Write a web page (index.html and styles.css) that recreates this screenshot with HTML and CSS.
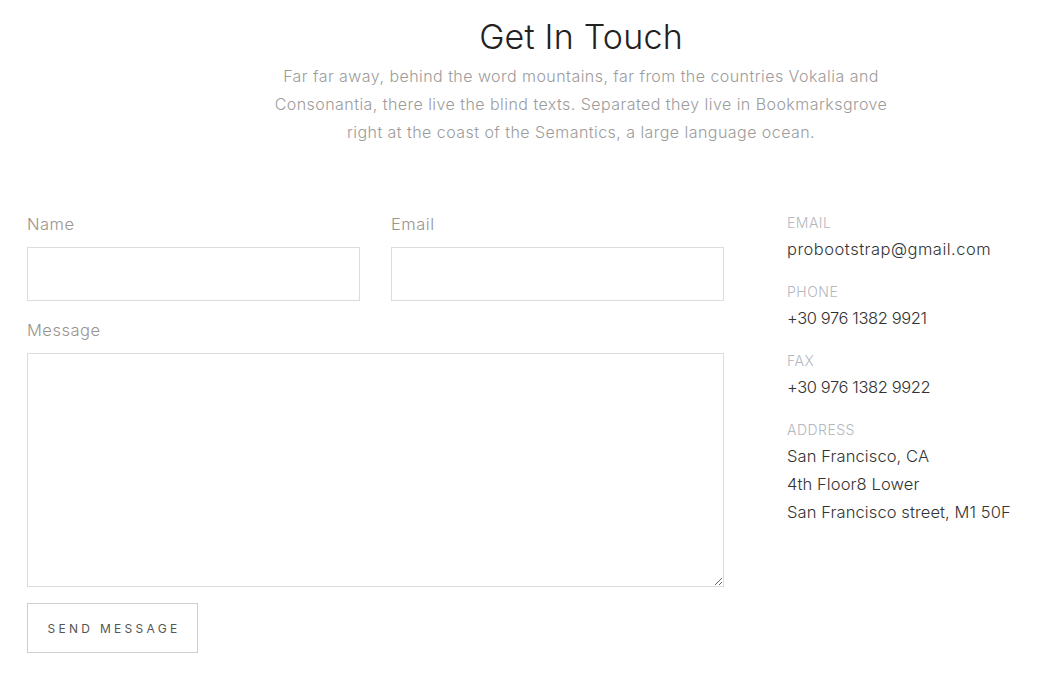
FILE: index.html
```html
<!DOCTYPE html>
<html lang="en">
<head>
<meta charset="utf-8">
<title>Get In Touch</title>
<link rel="stylesheet" href="styles.css">
</head>
<body>
<section class="contact">
  <header class="intro">
    <h2 class="intro-title">Get In Touch</h2>
    <p class="intro-text">Far far away, behind the word mountains, far from the countries Vokalia and<br>Consonantia, there live the blind texts. Separated they live in Bookmarksgrove<br>right at the coast of the Semantics, a large language ocean.</p>
  </header>
  <div class="contact-body">
    <form class="contact-form">
      <div class="form-row">
        <div class="field">
          <label class="field-label" for="name">Name</label>
          <input class="field-input" id="name" type="text">
        </div>
        <div class="field">
          <label class="field-label" for="email">Email</label>
          <input class="field-input" id="email" type="email">
        </div>
      </div>
      <div class="field">
        <label class="field-label" for="message">Message</label>
        <textarea class="field-textarea" id="message"></textarea>
      </div>
      <button class="send-btn" type="button">Send Message</button>
    </form>
    <aside class="contact-info">
      <div class="info-block">
        <div class="info-label">Email</div>
        <div class="info-value">probootstrap@gmail.com</div>
      </div>
      <div class="info-block">
        <div class="info-label">Phone</div>
        <div class="info-value info-number">+30 976 1382 9921</div>
      </div>
      <div class="info-block">
        <div class="info-label">Fax</div>
        <div class="info-value info-number">+30 976 1382 9922</div>
      </div>
      <div class="info-block">
        <div class="info-label">Address</div>
        <div class="info-value info-address">San Francisco, CA<br>4th Floor8 Lower<br>San Francisco street, M1 50F</div>
      </div>
    </aside>
  </div>
</section>
</body>
</html>
```
FILE: styles.css
```css
* { box-sizing: border-box; }
html, body { margin: 0; padding: 0; background: #fff; }
body {
  font-family: Inter, "Open Sans", "Liberation Sans", sans-serif;
  font-weight: 300;
  color: #333;
  width: 1056px;
  height: 696px;
  overflow: hidden;
}
.contact { padding: 0 0 0 27px; }
.intro {
  width: 660px;
  margin-left: 224px;
  text-align: center;
  padding-top: 15px;
}
.intro-title {
  margin: 0;
  font-size: 34px;
  font-weight: 300;
  line-height: 44px;
  letter-spacing: 0.2px;
  color: #222;
}
.intro-text {
  margin: 3px 0 0;
  font-size: 16px;
  line-height: 28px;
  letter-spacing: 0.45px;
  color: #9c9c9c;
}
.contact-body {
  display: flex;
  gap: 63px;
  margin-top: 66px;
}
.contact-form { width: 697px; flex: none; }
.form-row { display: flex; gap: 31px; }
.form-row .field { flex: 1; }
.field { margin-bottom: 17px; }
.contact-form > .field { margin-bottom: 16px; }
.field-label {
  display: block;
  font-size: 16.5px;
  line-height: 24px;
  letter-spacing: 0.5px;
  color: #9a948f;
  margin-bottom: 11px;
}
.field-input, .field-textarea {
  display: block;
  width: 100%;
  border: 1px solid #dcdcdc;
  border-radius: 0;
  background: #fff;
  font: inherit;
  outline: none;
}
.field-input { height: 54px; }
.field-textarea { height: 234px; resize: vertical; }
.send-btn {
  display: block;
  height: 50px;
  width: 171px;
  border: 1px solid #cfcfcf;
  background: #fff;
  font-family: inherit;
  font-weight: 400;
  font-size: 12px;
  letter-spacing: 3.3px;
  text-transform: uppercase;
  color: #555;
  padding: 0 0 0 3px;
  margin-top: 0;
}
.contact-info { padding-top: 1px; }
.info-block { margin-bottom: 19px; }
.info-label {
  font-size: 14px;
  line-height: 20px;
  letter-spacing: 0.5px;
  text-transform: uppercase;
  color: #b3b8bf;
  margin-bottom: 2px;
}
.info-value {
  font-size: 16.5px;
  line-height: 28px;
  letter-spacing: 0.5px;
  color: #333;
}
.info-number { letter-spacing: -0.4px; }
.info-address { letter-spacing: 0.1px; }
```
